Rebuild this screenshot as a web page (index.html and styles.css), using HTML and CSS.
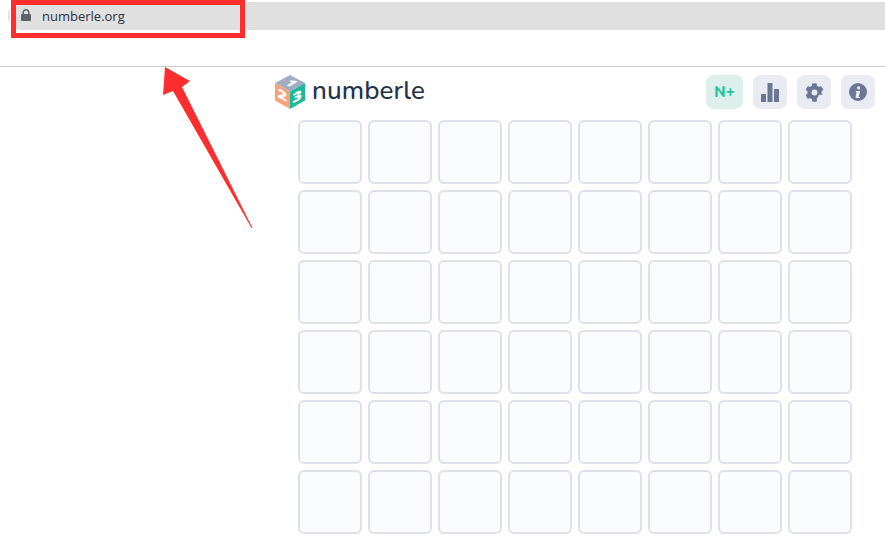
FILE: index.html
```html
<!DOCTYPE html>
<html lang="en">
<head>
<meta charset="utf-8">
<title>numberle</title>
<link rel="stylesheet" href="styles.css">
</head>
<body>
<div class="chrome">
  <div class="url-bar">
    <svg class="lock" viewBox="0 0 10 12" width="10" height="12"><path d="M1.500 5V3.600a3.500 3.500 0 0 1 7 0V5h.6a.9.9 0 0 1 .9.9v5.200a.9.9 0 0 1-.9.9H.9a.9.9 0 0 1-.9-.9V5.900A.9.9 0 0 1 .9 5zM3 5h4V3.600a2 2 0 0 0-4 0z" fill="#5f6368" fill-rule="evenodd"/></svg>
    <span class="url">numberle.org</span>
  </div>
</div>
<main class="game">
  <header class="head">
    <div class="brand">
      <svg class="cube" viewBox="0 0 32 34" width="32" height="34">
        <path d="M16 0 31 8 16 16.500 1 8z" fill="#a3adc2"/>
        <path d="M1 8 16 16.500V34L1 25.500z" fill="#f8a27c"/>
        <path d="M31 8 16 16.500V34L31 25.500z" fill="#1fb99a"/>
        <text class="cube-n" transform="matrix(.87 .5 -.87 .5 10 8.500)">1</text>
        <text class="cube-n" transform="translate(3.500 22) skewY(28) scale(1.250 1)">2</text>
        <text class="cube-n" transform="translate(18.500 28.500) skewY(-28) scale(1.250 1)">3</text>
      </svg>
      <span class="name">numberle</span>
    </div>
    <nav class="tools">
      <div class="tool plus">N+</div>
      <div class="tool">
        <svg viewBox="0 0 18 19" width="18" height="19"><path d="M0 11h5v8H0zM6.500 0h5v19h-5zM13 6h5v13h-5z" fill="#6b7695"/></svg>
      </div>
      <div class="tool">
        <svg viewBox="0 0 512 512" width="19" height="19"><path d="M487 316l-42-25a190 190 0 0 0 0-70l42-25c5-3 7-9 5-14a248 248 0 0 0-54-94c-4-4-10-5-15-2l-42 25a188 188 0 0 0-61-35V27c0-6-4-11-9-12a250 250 0 0 0-109 0c-5 1-9 6-9 12v49a194 194 0 0 0-61 35L90 87c-5-3-11-2-15 2a247 247 0 0 0-54 94c-2 5 0 11 5 14l42 25a190 190 0 0 0 0 70l-42 25c-5 3-7 9-5 14a248 248 0 0 0 54 94c4 4 10 5 15 2l42-25a188 188 0 0 0 61 35v49c0 6 4 11 9 12a250 250 0 0 0 109 0c5-1 9-6 9-12v-49a194 194 0 0 0-61-35l42 25c5 3 11 2 15-2a247 247 0 0 0 54-94c2-5 0-11-5-14zM256 336a80 80 0 1 1 0-160 80 80 0 0 1 0 160z" fill="#6b7695"/></svg>
      </div>
      <div class="tool">
        <svg viewBox="0 0 18 18" width="18" height="18"><path d="M9 0a9 9 0 1 1 0 18A9 9 0 0 1 9 0zm.6 3.200a1.700 1.700 0 1 0 0 3.400 1.700 1.700 0 0 0 0-3.400zM6.800 8l-.2 1h1l-1 4.500c-.2 1 .5 1.600 1.500 1.600h2.900l.2-1h-1c-.4 0-.5-.2-.4-.6l1.300-5.500z" fill="#6b7695" fill-rule="evenodd"/></svg>
      </div>
    </nav>
  </header>
  <div class="board" id="board">
    <div class="cell"></div><div class="cell"></div><div class="cell"></div><div class="cell"></div><div class="cell"></div><div class="cell"></div><div class="cell"></div><div class="cell"></div>
    <div class="cell"></div><div class="cell"></div><div class="cell"></div><div class="cell"></div><div class="cell"></div><div class="cell"></div><div class="cell"></div><div class="cell"></div>
    <div class="cell"></div><div class="cell"></div><div class="cell"></div><div class="cell"></div><div class="cell"></div><div class="cell"></div><div class="cell"></div><div class="cell"></div>
    <div class="cell"></div><div class="cell"></div><div class="cell"></div><div class="cell"></div><div class="cell"></div><div class="cell"></div><div class="cell"></div><div class="cell"></div>
    <div class="cell"></div><div class="cell"></div><div class="cell"></div><div class="cell"></div><div class="cell"></div><div class="cell"></div><div class="cell"></div><div class="cell"></div>
    <div class="cell"></div><div class="cell"></div><div class="cell"></div><div class="cell"></div><div class="cell"></div><div class="cell"></div><div class="cell"></div><div class="cell"></div>
  </div>
</main>
<div class="highlight"></div>
<svg class="arrow" viewBox="0 0 100 170" width="100" height="170"><path d="M15 7 40 21 32 27 102.500 168 101.500 168 23 31 13 35z" fill="#ff2e2e"/></svg>
</body>
</html>
```
FILE: styles.css
```css
* { box-sizing: border-box; }
html, body { margin: 0; height: 100%; overflow: hidden; background: #fff; }
body { position: relative; font-family: "Liberation Sans", sans-serif; }

.chrome {
  height: 67px;
  padding: 2px 0 0 8px;
  border-bottom: 1px solid #cfcfcf;
}
.url-bar {
  height: 28px;
  display: flex;
  align-items: center;
  gap: 11px;
  padding-left: 13px;
  background: #e0e0e0;
  border-radius: 14px 0 0 14px;
}
.lock { margin-top: -2px; }
.url {
  font-family: "Open Sans", sans-serif;
  font-size: 13px;
  color: #2b3240;
}

.game { margin: 8px 10px 0 274px; }
.head {
  display: flex;
  justify-content: space-between;
  align-items: center;
  height: 34px;
}
.brand { display: flex; align-items: center; gap: 6px; }
.cube { display: block; flex: none; }
.cube-n {
  font-family: "Open Sans", sans-serif;
  font-size: 13px;
  font-weight: 800;
  fill: #fff;
}
.name {
  padding-bottom: 4px;
  font-family: "Nunito", "Inter", sans-serif;
  font-size: 26px;
  font-weight: 500;
  color: #243349;
  letter-spacing: .1px;
}
.tools { display: flex; gap: 10px; }
.tool {
  width: 34px;
  height: 34px;
  border-radius: 8px;
  background: #e9ebf2;
  display: flex;
  align-items: center;
  justify-content: center;
}
.tool.plus {
  width: 37px;
  background: #dcefea;
  color: #1fc6a0;
  font-family: "Nunito", "Inter", sans-serif;
  font-size: 15px;
  font-weight: 800;
}
.board {
  display: grid;
  grid-template-columns: repeat(8, 64px);
  grid-auto-rows: 64px;
  gap: 6px;
  margin: 11px 0 0 24px;
}
.cell {
  border: 2px solid #dfe1ea;
  border-radius: 6px;
  background: #fbfcff;
}

.highlight {
  position: absolute;
  left: 11px;
  top: 0;
  width: 234px;
  height: 38px;
  border: 5px solid #ff2e2e;
  box-shadow: 0 0 0 1px #fff;
}
.arrow {
  position: absolute;
  left: 150px;
  top: 60px;
  overflow: visible;
}
```
